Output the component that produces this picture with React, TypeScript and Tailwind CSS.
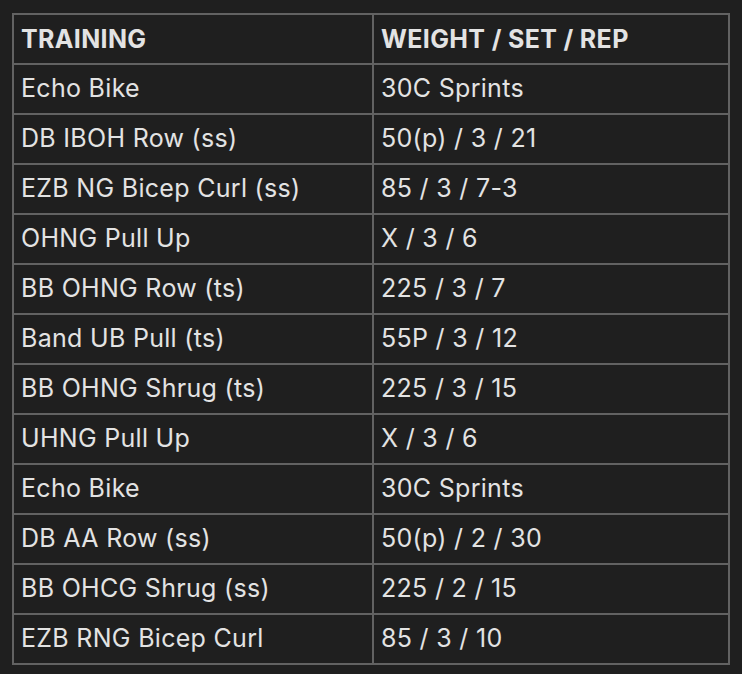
import React from "react";

interface Row {
  training: string;
  load: string;
}

const rows: Row[] = [
  { training: "Echo Bike", load: "30C Sprints" },
  { training: "DB IBOH Row (ss)", load: "50(p) / 3 / 21" },
  { training: "EZB NG Bicep Curl (ss)", load: "85 / 3 / 7-3" },
  { training: "OHNG Pull Up", load: "X / 3 / 6" },
  { training: "BB OHNG Row (ts)", load: "225 / 3 / 7" },
  { training: "Band UB Pull (ts)", load: "55P / 3 / 12" },
  { training: "BB OHNG Shrug (ts)", load: "225 / 3 / 15" },
  { training: "UHNG Pull Up", load: "X / 3 / 6" },
  { training: "Echo Bike", load: "30C Sprints" },
  { training: "DB AA Row (ss)", load: "50(p) / 2 / 30" },
  { training: "BB OHCG Shrug (ss)", load: "225 / 2 / 15" },
  { training: "EZB RNG Bicep Curl", load: "85 / 3 / 10" },
];

export default function App() {
  return (
    <div
      className="min-h-screen bg-[#1f1f1f] pl-3 pr-3 pt-[13px] text-[#e3e3e3]"
      style={{ fontFamily: "Inter, 'Noto Sans', sans-serif" }}
    >
      <table className="w-[718px] table-fixed border-collapse">
        <thead>
          <tr className="h-[50px]">
            <th className="w-[360px] border-2 border-[#626262] px-[7px] pt-[1px] text-left text-[25px] font-bold tracking-[0.35px]">
              TRAINING
            </th>
            <th className="border-2 border-[#626262] px-[7px] pt-[1px] text-left text-[25px] font-bold tracking-[0.35px]">
              WEIGHT / SET / REP
            </th>
          </tr>
        </thead>
        <tbody>
          {rows.map((row, i) => (
            <tr key={i} className="h-[50px]">
              <td className="border-2 border-[#626262] px-[7px] text-[25px] tracking-[0.3px]">
                {row.training}
              </td>
              <td className="border-2 border-[#626262] px-[7px] text-[25px] tracking-[0.3px]">
                {row.load}
              </td>
            </tr>
          ))}
        </tbody>
      </table>
    </div>
  );
}
